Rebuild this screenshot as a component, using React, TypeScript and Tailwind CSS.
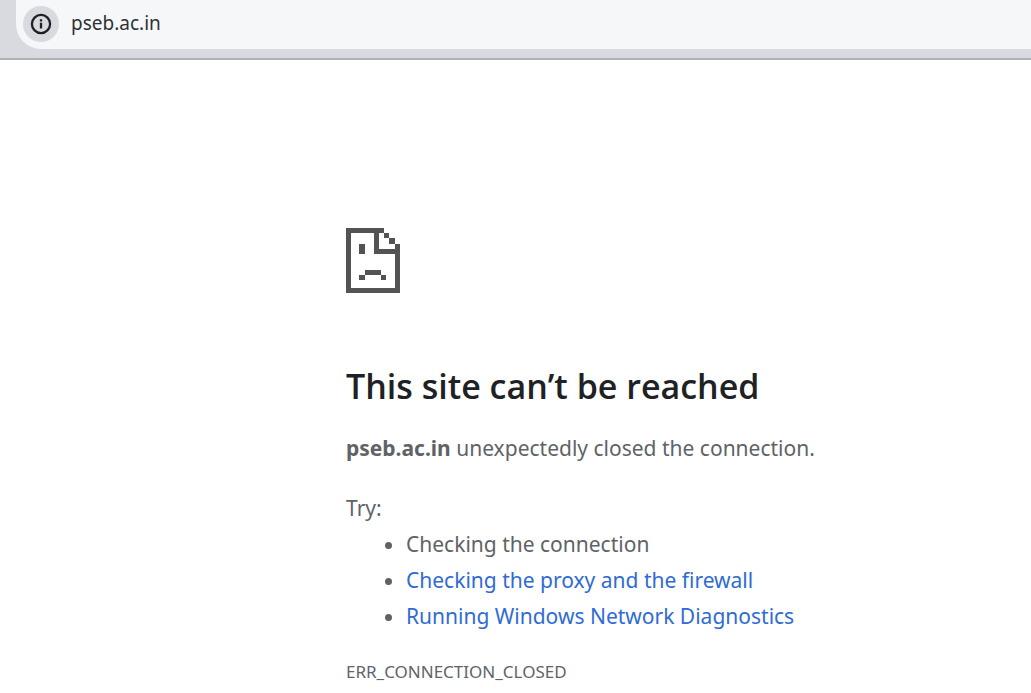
const suggestions = [
  { text: "Checking the connection" },
  { text: "Checking the proxy and the firewall", href: "#proxy" },
  { text: "Running Windows Network Diagnostics", href: "#diagnostics" },
];

function InfoIcon() {
  return (
    <svg width="22" height="22" viewBox="0 0 22 22" fill="none" aria-hidden="true">
      <circle cx="11" cy="11" r="9.1" stroke="#1f2024" strokeWidth="2.3" />
      <path d="M11 9.8v5.6M11 6.2v2.2" stroke="#1f2024" strokeWidth="2.3" />
    </svg>
  );
}

function SadPageIcon() {
  return (
    <svg
      width="54"
      height="65"
      viewBox="0 0 54 65"
      fill="#535353"
      shapeRendering="crispEdges"
      aria-hidden="true"
    >
      {/* page outline with the folded corner */}
      <path d="M0 0H38V5H33V21H49V16H54V65H0ZM5 5V60H49V26H28V5Z" fillRule="evenodd" />
      <path d="M38 5h5v5h-5zM43 10h6v6h-6z" />
      {/* face */}
      <path d="M13 16h6v10h-6zM19 42h16v5H19zM13 47h6v5h-6zM35 47h5v5h-5z" />
    </svg>
  );
}

export default function App() {
  return (
    <div className="min-h-screen bg-white font-['Noto_Sans','Open_Sans',sans-serif] text-[#5f6368]">
      <header className="border-b-2 border-[#b0b0b5] bg-[#d9dadf] pb-[9px] pl-4">
        <div className="flex h-[49px] items-center rounded-bl-[25px] bg-[#f6f7f9] pb-[2px] pl-[7px]">
          <button
            type="button"
            aria-label="View site information"
            className="flex size-9 items-center justify-center rounded-full bg-[#d9dadf]"
          >
            <InfoIcon />
          </button>
          <input
            type="text"
            aria-label="Address"
            defaultValue="pseb.ac.in"
            className="ml-3 min-w-0 flex-1 bg-transparent text-[19px] text-[#303136] outline-none"
          />
        </div>
      </header>

      <main className="pt-[168px] pl-[346px]">
        <SadPageIcon />
        <h1 className="mt-[67px] font-['Open_Sans',sans-serif] text-[34px] leading-[52px] font-semibold text-[#202124]">
          This site can’t be reached
        </h1>
        <p className="mt-[18px] text-[21px] leading-9">
          <strong>pseb.ac.in</strong> unexpectedly closed the connection.
        </p>
        <div className="mt-6 text-[21px] leading-9">
          <p>Try:</p>
          <ul className="list-disc pl-[60px]">
            {suggestions.map(({ text, href }) => (
              <li key={text}>
                {href ? (
                  <a href={href} className="text-[#2f6bd6]">
                    {text}
                  </a>
                ) : (
                  text
                )}
              </li>
            ))}
          </ul>
        </div>
        <p className="mt-6 text-[17px] leading-7">ERR_CONNECTION_CLOSED</p>
      </main>
    </div>
  );
}
